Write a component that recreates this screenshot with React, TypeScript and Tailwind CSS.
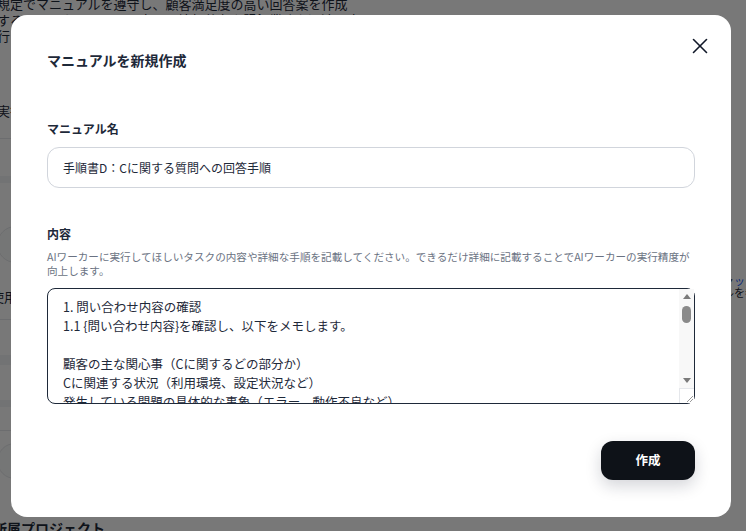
import React from 'react';
import { X } from 'lucide-react';

const manualBody = `1. 問い合わせ内容の確認
1.1 {問い合わせ内容}を確認し、以下をメモします。

顧客の主な関心事（Cに関するどの部分か）
Cに関連する状況（利用環境、設定状況など）
発生している問題の具体的な事象（エラー、動作不良など）
顧客が既に試した対処方法

2. 関連情報の調査
2.1 社内のナレッジベースからCに関する情報を検索します。
2.2 過去の類似した問い合わせと回答履歴を確認します。
2.3 必要に応じて担当部署に確認を依頼します。

3. 回答案の作成
3.1 調査結果をもとに、顧客の質問に対する回答案を作成します。
3.2 専門用語は避け、わかりやすい表現を使用します。
3.3 手順が必要な場合は、番号付きで具体的に記載します。

4. 回答内容の確認
4.1 回答案が規定やマニュアルに沿っているか確認します。
4.2 誤字脱字や表現の誤りがないか確認します。

5. 記録と共有
5.1 回答内容を記録システムに登録します。
5.2 チーム内で共有が必要な情報をまとめます。`;

// 背景のページ（モーダルの下に見えている部分）
function BackgroundPage() {
  return (
    <div className="flex h-[531px] w-full overflow-hidden bg-white text-gray-800">
      <div className="-ml-[3px] w-[360px] shrink-0 whitespace-nowrap">
        <p className="-mt-[4px] text-[13px] leading-[16px]">
          規定でマニュアルを遵守し、顧客満足度の高い回答案を作成
          <br />
          することともに、チーム内での情報共有や記録業務を迅速に実
          <br />
          行
        </p>
        <div className="mt-[59px] text-[13px] leading-[16px]">実行</div>
        <div className="mt-[19px] border-t border-gray-200" />
        <div className="mt-[37px] h-[7px] bg-gray-100" />
        <div className="mt-[43px] flex h-[37px] items-center rounded-full border border-gray-200 bg-gray-50 pl-[12px] text-[13px]">
          ・
        </div>
        <div className="-ml-[6px] mt-[26px] text-[13px] leading-[16px]">使用</div>
        <div className="mt-[14px] border-t border-gray-200" />
        <div className="mt-[35px] h-[10px] bg-gray-100" />
        <div className="mt-[35px] h-[7px] bg-gray-100" />
        <div className="mt-[23px] border-t border-gray-200" />
        <div className="mt-[12px] flex h-[36px] items-center rounded-full border border-gray-200 bg-gray-50 pl-[12px] text-[13px]">
          ・
        </div>
        <div className="-ml-[4px] mt-[41px] text-[14px] font-bold leading-[16px]">所属プロジェクト</div>
      </div>
      <div className="ml-auto w-[56px] shrink-0 whitespace-nowrap pt-[274px] text-[11px] leading-[12px]">
        <div>
          社内チャ<span className="text-blue-600">ット</span>履歴
        </div>
        <div>ファイルを参照</div>
      </div>
    </div>
  );
}

// テキストエリアのスクロールバー（クラシック表示）
function FakeScrollbar() {
  return (
    <div className="pointer-events-none absolute bottom-[1px] right-[1px] top-[1px] flex w-[15px] flex-col bg-[#f8f8f8]">
      <div className="flex h-[15px] items-center justify-center">
        <svg width="8" height="5" viewBox="0 0 8 5">
          <path d="M0 5 L4 0 L8 5 Z" fill="#7a7a7a" />
        </svg>
      </div>
      <div className="flex-1 px-[3px] pt-[2px]">
        <div className="h-[17px] w-full rounded-full bg-[#8a8a8a]" />
      </div>
      <div className="flex h-[15px] items-center justify-center">
        <svg width="8" height="5" viewBox="0 0 8 5">
          <path d="M0 0 L8 0 L4 5 Z" fill="#7a7a7a" />
        </svg>
      </div>
      <div className="flex h-[15px] items-end justify-end border-l border-t border-gray-200 bg-white">
        <svg width="10" height="10" viewBox="0 0 10 10">
          <path d="M9 3 L3 9 M9 6 L6 9" stroke="#9a9a9a" strokeWidth="1" />
        </svg>
      </div>
    </div>
  );
}

export default function App() {
  return (
    <div className="relative h-[531px] w-[746px] overflow-hidden font-['Noto_Sans_CJK_JP','Noto_Sans',sans-serif]">
      <BackgroundPage />

      {/* モーダル */}
      <div className="fixed inset-0 flex items-start bg-black/[0.53] pl-[11px] pt-[15px]">
        <div className="relative flex h-[502px] w-[720px] flex-col rounded-2xl bg-white px-[36px] pt-[35px]">
          <button
            className="absolute right-[18px] top-[18px] text-gray-900"
            title="閉じる"
          >
            <X size={26} strokeWidth={1.5} />
          </button>

          <h2 className="text-[14px] font-bold leading-[20px] text-gray-800">マニュアルを新規作成</h2>

          {/* マニュアル名 */}
          <label className="mt-[49px] block text-[12px] font-bold leading-[20px] text-gray-800">
            マニュアル名
          </label>
          <input
            type="text"
            defaultValue="手順書D：Cに関する質問への回答手順"
            className="mt-[8px] h-[41px] w-full rounded-xl border border-gray-300 px-[15px] text-[12px] text-gray-800 outline-none"
          />

          {/* 内容 */}
          <label className="mt-[36px] block text-[12px] font-bold leading-[20px] text-gray-800">内容</label>
          <p className="mt-[6px] text-[10.6px] leading-[14px] text-gray-500">
            AIワーカーに実行してほしいタスクの内容や詳細な手順を記載してください。できるだけ詳細に記載することでAIワーカーの実行精度が向上します。
          </p>
          <div className="relative mt-[10px]">
            <textarea
              defaultValue={manualBody}
              className="block h-[116px] w-full resize-none overflow-y-scroll rounded-lg border border-gray-800 pl-[15px] pr-[30px] pt-[7.5px] text-[12.5px] leading-[19px] text-gray-800 outline-none [scrollbar-width:none]"
            />
            <FakeScrollbar />
          </div>

          <div className="mt-[37px] flex justify-end">
            <button className="h-[39px] w-[94px] rounded-xl bg-[#0e1218] text-[12.5px] font-bold text-white shadow-[0_6px_16px_rgba(15,23,42,0.18)]">
              作成
            </button>
          </div>
        </div>
      </div>
    </div>
  );
}
